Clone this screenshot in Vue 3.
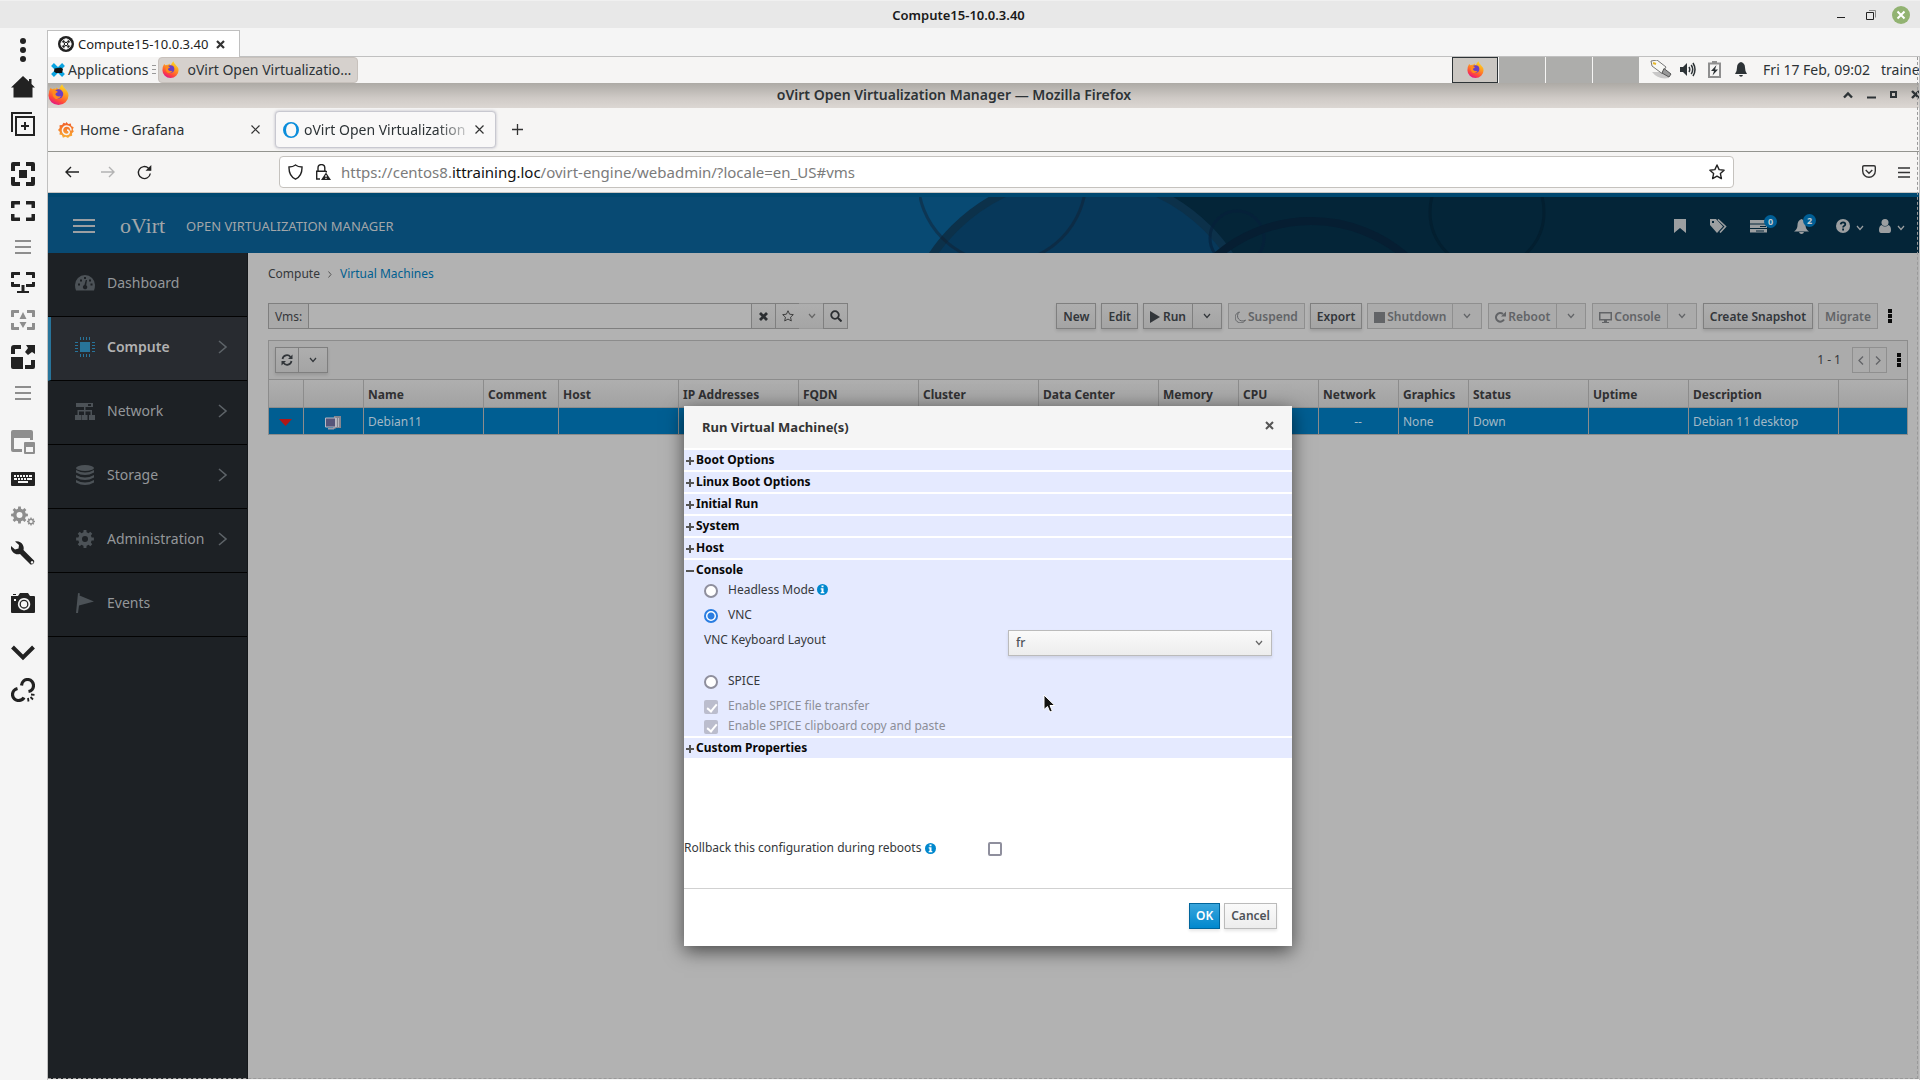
<script setup>
import { ref } from 'vue'

const gear = (cx, cy, r, teeth, hole) => {
  let d = ''
  const inner = r * 0.76
  const step = (Math.PI * 2) / teeth
  const pt = (rad, a) => `${(cx + rad * Math.cos(a)).toFixed(2)} ${(cy + rad * Math.sin(a)).toFixed(2)}`
  for (let i = 0; i < teeth; i++) {
    const a = i * step - Math.PI / 2
    d += `${i ? 'L' : 'M'}${pt(inner, a - step * 0.3)}L${pt(r, a - step * 0.2)}L${pt(r, a + step * 0.2)}L${pt(inner, a + step * 0.3)}`
  }
  return `${d}ZM${cx - hole} ${cy}a${hole} ${hole} 0 1 0 ${hole * 2} 0a${hole} ${hole} 0 1 0 ${-hole * 2} 0Z`
}

const lines = '<path d="M4 5h16v2H4zM4 11h16v2H4zM4 17h16v2H4z"/>'
const tools = [
  { id: 'Menu', art: '<circle cx="12" cy="3" r="3"/><circle cx="12" cy="12" r="3"/><circle cx="12" cy="21" r="3"/>' },
  { id: 'Home', art: '<path d="M12 1 0 12.500h2.500V22.500h19V12.500H24L20.500 9V4H18v2.500z"/>' },
  { id: 'Duplicate', art: '<path d="M1 20V1h20M5 5h18v18H5zM14 10v8M10 14h8" fill="none" stroke="currentColor" stroke-width="2"/>' },
  { id: 'Fit window', gap: true, art: '<path d="M0 9V2q0-2 2-2h7v4H4v5zM15 0h7q2 0 2 2v7h-4V4h-5zM0 15v7q0 2 2 2h7v-4H4v-5zM24 15v7q0 2-2 2h-7v-4h5v-5zM8 8h8v8H8z"/>' },
  { id: 'Full screen', art: '<path d="M0 9V3q0-1 1-1h8v3.500H3.500V9zM15 2h8q1 0 1 1v6h-3.500V5.500H15zM0 15v6q0 1 1 1h8v-3.500H3.500V15zM24 15v6q0 1-1 1h-8v-3.500h5.500V15z"/>' },
  { id: 'View list', short: true, dim: true, art: lines },
  { id: 'Multi monitor', art: '<path d="M0 7V2q0-1 1-1h8v3H3v3zM15 1h8q1 0 1 1v5h-3V4h-6zM0 11v4q0 1 1 1h8v-3H3v-2zM24 11v4q0 1-1 1h-8v-3h6v-2zM10.500 14h3v6H18v2H6v-2h4.500z"/>' },
  { id: 'Dynamic resolution', dim: true, art: '<path d="M0 9V3q0-1 1-1h7v3H3v4zM16 2h7q1 0 1 1v6h-3V5h-5zM0 15v6q0 1 1 1h7v-3H3v-4zM24 15v6q0 1-1 1h-7v-3h5v-4zM12 4l3.500 7h-7zM12 20l3.500-6h-7z"/>' },
  { id: 'Scaled mode', art: '<path d="M0 9V3q0-3 3-3h7v4H4v5zM0 12h12v12H2q-2 0-2-2zM15 0h9v9l-3-2-4 3-3-3 3-4zM20 15h4v7q0 2-2 2h-8v-4h6z"/>' },
  { id: 'Tab list', short: true, dim: true, art: lines },
  { id: 'Switch page', gap: true, dim: true, art: '<path d="M0 2q0-2 2-2h18q2 0 2 2v8h-3V8H3v11h8v3H2q-2 0-2-2zM13 13q0-1 1-1h9q1 0 1 1v10q0 1-1 1h-9q-1 0-1-1zm2 4v5h7v-5z" fill-rule="evenodd"/>' },
  { id: 'Grab keyboard', art: '<path fill-rule="evenodd" d="M1 5h22q1 0 1 1v12q0 1-1 1H1q-1 0-1-1V6q0-1 1-1zM3 8v2h2V8zm3 0v2h2V8zm3 0v2h2V8zm3 0v2h2V8zm3 0v2h2V8zm3 0v2h3V8zM3 11v2h3v-2zm4 0v2h2v-2zm3 0v2h2v-2zm3 0v2h2v-2zm3 0v2h5v-2zM7 14v2h10v-2z"/>' },
  { id: 'Preferences', dim: true, art: `<path fill-rule="evenodd" d="${gear(8.5, 11, 8.5, 8, 3)}${gear(20, 17.5, 4, 8, 1.6)}"/>` },
  { id: 'Tools', art: '<path fill-rule="evenodd" d="M4 .5a7 7 0 0 1 8.500 8.500L23 19.500a3 3 0 0 1-3.500 4L9 13A7 7 0 0 1 0 5l4 3.500 3.500-1 .5-3.500zM21 20a1.300 1.300 0 1 0 .1 0z"/>' },
  { id: 'Screenshot', gap: true, art: '<path fill-rule="evenodd" d="M9 2h8l2 3h4q1 0 1 1v15q0 1-1 1H1q-1 0-1-1V5h7zM13 7a6.200 6.200 0 1 0 .1 0zM3 8v2h2V8zM2 3h3v1H2z"/><circle cx="13" cy="13.200" r="3.800" fill="none" stroke="currentColor" stroke-width="1.300"/>' },
  { id: 'Minimize', gap: true, art: '<path d="m1.500 6 10.500 10.500L22.500 6" fill="none" stroke="currentColor" stroke-width="4"/>' },
  { id: 'Disconnect', art: '<path d="M10.500 7.500C11 3.500 14 1.500 16.500 1.500c4 0 6 3.500 6 6 0 3-2 5.500-5 6M6.500 10.500c-3 .8-5 3.500-5 6 0 3.500 3 6 6 6 2 0 4.500-1 5.500-3" fill="none" stroke="currentColor" stroke-width="3.200"/><path d="m17 20 .5 3.500M19.500 19l2.500 2.500M20 16.500l3.500.3" stroke="currentColor" stroke-width="1.800"/>' },
]

const nav = [
  { label: 'Dashboard', art: '<path fill-rule="evenodd" d="M10 2a10 10 0 0 1 10 10q0 3-1 5.500H1Q0 15 0 12A10 10 0 0 1 10 2zM3 10.500v2h2v-2zm2-4v2h2v-2zm4-2.500v2h2V4zm5 2.500v2h2v-2zm1.500 4v2h2v-2zM10.800 7l-1.400 5a2.200 2.200 0 1 0 1.800.2L12 7z"/>' },
  { label: 'Compute', more: true, active: true, art: '<path d="M5 5h10v10H5zM5 0h1v3H5zM8 0h1v3H8zM11 0h1v3h-1zM14 0h1v3h-1zM5 17h1v3H5zM8 17h1v3H8zM11 17h1v3h-1zM14 17h1v3h-1zM0 5h3v1H0zM0 8h3v1H0zM0 11h3v1H0zM0 14h3v1H0zM17 5h3v1h-3zM17 8h3v1h-3zM17 11h3v1h-3zM17 14h3v1h-3z"/>' },
  { label: 'Network', more: true, art: '<path fill-rule="evenodd" d="M1 2h17v4H1zM13 3v2h3V3zM9 6h1.500v3H17v5h3v5h-6v-5h1.500v-3.500h-5V14h2v5h-6v-5H9v-3.500H4V14h2v5H0v-5h2.500V9H9z"/>' },
  { label: 'Storage', more: true, art: '<ellipse cx="10" cy="3" rx="9" ry="3"/><path d="M1 5q9 5 18 0v2.500q-9 5-18 0zM1 10q9 5 18 0v2.500q-9 5-18 0zM1 15q9 5 18 0v2.500q-9 5-18 0z"/>' },
  { label: 'Administration', more: true, art: `<path fill-rule="evenodd" d="${gear(10, 10, 9, 8, 3)}"/>` },
  { label: 'Events', art: '<path d="M3 0 5 .5 4.500 2.500 19 8.500 4 12.500 3 20H1z"/>' },
]

const columns = [
  { name: '', width: 35 }, { name: '', width: 60 }, { name: 'Name', width: 120, value: 'Debian11' },
  { name: 'Comment', width: 75 }, { name: 'Host', width: 120 }, { name: 'IP Addresses', width: 120 },
  { name: 'FQDN', width: 120 }, { name: 'Cluster', width: 120 }, { name: 'Data Center', width: 120 },
  { name: 'Memory', width: 80 }, { name: 'CPU', width: 80 }, { name: 'Network', width: 80, value: '--', center: true },
  { name: 'Graphics', width: 70, value: 'None' }, { name: 'Status', width: 120, value: 'Down' },
  { name: 'Uptime', width: 100 }, { name: 'Description', width: 150, value: 'Debian 11 desktop' }, { name: '', width: 0 },
]

const actions = [
  { label: 'New' }, { label: 'Edit' },
  { label: 'Run', split: true, art: '<path d="M0 0 10 6 0 12z"/>' },
  { label: 'Suspend', off: true, art: '<path d="M4.500 1A5.500 5.500 0 1 0 10.500 9 5 5 0 0 1 4.500 1z" fill="none" stroke="currentColor"/>' },
  { label: 'Export' },
  { label: 'Shutdown', off: true, split: true, art: '<path d="M0 1h11v11H0z"/>' },
  { label: 'Reboot', off: true, split: true, art: '<path d="M9 8.500A4.300 4.300 0 1 1 8 3" fill="none" stroke="currentColor" stroke-width="2"/><path d="M6 5.500h5V.5z"/>' },
  { label: 'Console', off: true, split: true, wide: true, art: '<path fill-rule="evenodd" d="M0 1h13v8.500H8V11h2v1H3v-1h2V9.500H0zM1.500 2.500V8h10V2.500z"/>' },
  { label: 'Create Snapshot' }, { label: 'Migrate', off: true },
]

const closed = ['Boot Options', 'Linux Boot Options', 'Initial Run', 'System', 'Host']
const protocol = ref('vnc')
const layout = ref('fr')
const search = ref('')
const url = 'https://centos8.ittraining.loc/ovirt-engine/webadmin/?locale=en_US#vms'
const urlParts = url.split('ittraining.loc')
</script>

<template>
  <div class="desktop">
    <svg class="defs" aria-hidden="true">
      <defs>
        <linearGradient id="fxFlame" x1="0.8" y1="0" x2="0.3" y2="1">
          <stop offset="0" stop-color="#ffe226" /><stop offset=".4" stop-color="#ff9a1e" />
          <stop offset=".75" stop-color="#ff4a3a" /><stop offset="1" stop-color="#e3108a" />
        </linearGradient>
        <linearGradient id="grafana" x1="0" y1="0" x2="0" y2="1">
          <stop offset="0" stop-color="#f05a28" /><stop offset="1" stop-color="#fbb034" />
        </linearGradient>
        <symbol id="firefox" viewBox="0 0 20 20">
          <path fill="url(#fxFlame)" d="M2.500 3.500 4 5q1.500-1 3.500-.5L8.500 3q.5 1.500 2 2Q11.500 2 13.500.3q.3 2.200 2.500 4Q19.500 7.500 19.500 11A9.500 9 0 0 1 .5 11Q.5 6.500 2.500 3.500z" />
          <circle cx="10" cy="9.500" r="4.500" fill="#6a3fc4" />
          <path fill="#ff8a1c" d="M4.500 6.500q2.500-1.500 5 1-2.500.5-2.500 2.500 1.500 2.500 5.500 1.500-2 3.500-5.500 2.500-3.500-2-2.500-7.500z" />
        </symbol>
        <symbol id="caret" viewBox="0 0 8 6"><path d="m1 1 3 3.500L7 1" fill="none" stroke="currentColor" stroke-width="1.200" /></symbol>
        <symbol id="info" viewBox="0 0 11 11">
          <circle cx="5.500" cy="5.500" r="5.500" fill="#0088ce" />
          <path fill="#fff" d="M4.500 1.500h2v1.700h-2zM3.700 4.200h2.800v3.800h.8v1.200H3.700V8h.8V5.400h-.8z" />
        </symbol>
      </defs>
    </svg>

    <header class="host-title">
      <span class="host-name">Compute15-10.0.3.40</span>
      <div class="host-buttons">
        <button class="host-min" aria-label="Minimize"><svg width="8" height="12"><path d="M0 8.500h8" stroke="#222" /></svg></button>
        <button aria-label="Restore"><svg width="10" height="10"><path d="M3 .5h6.500v7" fill="none" stroke="#888" /><path d="M.5 2.500h7v7h-7z" fill="none" stroke="#222" /></svg></button>
        <button aria-label="Close"><svg width="18" height="18"><circle cx="9" cy="9" r="9" fill="#92b372" /><path d="m5.500 5.500 7 7m0-7-7 7" stroke="#fff" stroke-width="2" /></svg></button>
      </div>
    </header>

    <div class="client">
      <aside class="tools">
        <button v-for="t in tools" :key="t.id" :aria-label="t.id" :class="{ gap: t.gap, short: t.short, dim: t.dim }">
          <svg viewBox="0 0 24 24" v-html="t.art"></svg>
        </button>
      </aside>

      <div class="session">
        <div class="session-tabs">
          <div class="session-tab">
            <svg width="16" height="16" viewBox="0 0 16 16"><circle cx="8" cy="8" r="8" fill="#222" /><g fill="#fff"><circle cx="8" cy="4.300" r="1.700" /><circle cx="8" cy="11.700" r="1.700" /><circle cx="4.300" cy="8" r="1.700" /><circle cx="11.700" cy="8" r="1.700" /></g><circle cx="8" cy="8" r="5" fill="none" stroke="#fff" /><path d="m6.500 6.500 3 3m0-3-3 3" stroke="#fff" /></svg>
            <span>Compute15-10.0.3.40</span>
            <button aria-label="Close tab"><svg width="9" height="9"><path d="m1 1 7 7m0-7-7 7" stroke="#333" stroke-width="2.200" /></svg></button>
          </div>
        </div>

        <div class="viewport">
          <div class="guest">
            <div class="panel">
              <button class="apps">
                <svg width="14" height="14" viewBox="0 0 14 14"><path d="m1.500 1.500 11 11m0-11-11 11" stroke="#0aa3e0" stroke-width="4" /><path d="M3.500 5.500 10 4.500l2 1.500-1 4H5L3 8.500z" fill="#111" /></svg>
                Applications
              </button>
              <svg class="grip" width="4" height="9"><path d="M0 .5h4M0 4.500h4M0 8.500h4" stroke="#999" /></svg>
              <button class="task"><svg width="17" height="17"><use href="#firefox" /></svg>oVirt Open Virtualizatio…</button>
              <div class="pager">
                <button class="on" aria-label="Workspace 1"><svg width="17" height="17"><use href="#firefox" /></svg></button>
                <button v-for="n in 3" :key="n" :aria-label="'Workspace ' + (n + 1)"></button>
              </div>
              <div class="tray">
                <svg width="22" height="20" viewBox="0 0 22 20"><path d="M2 12q6 8 17 6l-3-6z" fill="#000" opacity=".18" /><path d="m1 1 6-1 9 7-4 6.500L2 6z" fill="#f7f7f5" stroke="#777" /><path d="m14 8.500 7 5.500-2 3-7-4z" fill="#999" stroke="#555" /><path d="m3 3 3 1" stroke="#e5b62c" stroke-width="2" /></svg>
                <svg width="16" height="15" viewBox="0 0 16 15"><path d="M0 5h3l4-4v13l-4-4H0z" fill="#2d3336" /><path d="M9 5q1.500 2.500 0 5M11.200 3q3 4.500 0 9M13 1q4 6.500 0 13" fill="none" stroke="#2d3336" stroke-width="1.500" /></svg>
                <svg width="13" height="17" viewBox="0 0 13 17"><path d="M1 2.500h11V16H1z" fill="none" stroke="#8f8f8f" stroke-width="2" /><path d="M4 0h5v3H4z" fill="#8f8f8f" /><path d="m8.500 4-5.500 6h3l-1.500 4.500 5.500-6H7z" fill="#2d3336" /></svg>
                <svg width="12" height="15" viewBox="0 0 12 15"><path d="M6 0q4 1 4 5.500 0 4 2 6.500H0q2-2.500 2-6.500Q2 1 6 0zM4 13h4q-.5 1.800-2 1.800T4 13z" fill="#2d3336" /></svg>
              </div>
              <span class="clock">Fri 17 Feb, 09:02</span>
              <span class="user">traine</span>
            </div>

            <div class="win-title">
              <svg width="21" height="21"><use href="#firefox" /></svg>
              <span>oVirt Open Virtualization Manager — Mozilla Firefox</span>
              <div class="win-buttons">
                <svg width="10" height="8"><path d="m1 6.500 4-4 4 4" fill="none" stroke="#2d3336" stroke-width="2.400" /></svg>
                <svg width="9" height="8"><path d="M0 6.500h9" stroke="#2d3336" stroke-width="2" /></svg>
                <svg width="7" height="7"><path d="M1 1h5v5H1z" fill="none" stroke="#2d3336" stroke-width="2" /></svg>
                <svg width="9" height="9"><path d="m1 1 7 7m0-7-7 7" stroke="#2d3336" stroke-width="2.400" /></svg>
              </div>
            </div>

            <div class="tabs">
              <div class="tab">
                <svg width="16" height="16" viewBox="0 0 16 16"><path fill="url(#grafana)" d="m8.500 0 1.700 2 2.600-.5.500 2.600 2.400 1.200-.9 2.200 1 2-1.800 1.800.2 2.500-2.700.6L10 16l-2.400-1.200-2.700.9-1-2.700-2.500-.6.500-2.500L0 8l1.700-2-.2-2.700 2.600-.4L5.500.8l2 .7z" /><path d="M13 8.500A4.300 4.300 0 1 0 9 12.500q2-.3 2.300-2.200Q11 8 9 8" fill="none" stroke="#f6f5f4" stroke-width="1.500" /></svg>
                <span>Home - Grafana</span>
                <button aria-label="Close tab"><svg width="9" height="9"><path d="m.5.5 8 8m0-8-8 8" stroke="#333" stroke-width="1.200" /></svg></button>
              </div>
              <div class="tab current">
                <svg width="16" height="16" viewBox="0 0 16 16"><path fill="#0b8ddb" fill-rule="evenodd" d="M8 0a8 8 0 0 1 0 16A8 8 0 0 1 8 0zm.3 1.500q-5 0-5.300 6.500.3 6.500 5.300 6.500 4.700 0 5-6.500-.3-6.500-5-6.500z" /></svg>
                <span>oVirt Open Virtualization</span>
                <button aria-label="Close tab"><svg width="9" height="9"><path d="m.5.5 8 8m0-8-8 8" stroke="#333" stroke-width="1.200" /></svg></button>
              </div>
              <button class="plus" aria-label="New tab"><svg width="11" height="11"><path d="M5.500 0v11M0 5.500h11" stroke="#333" stroke-width="1.300" /></svg></button>
            </div>

            <div class="navbar">
              <button aria-label="Back"><svg width="14" height="12"><path d="M14 6H1M6 1 1 6l5 5" fill="none" stroke="#222" stroke-width="1.400" /></svg></button>
              <button aria-label="Forward"><svg width="14" height="12"><path d="M0 6h13M8 1l5 5-5 5" fill="none" stroke="#b3b3b3" stroke-width="1.400" /></svg></button>
              <button aria-label="Reload"><svg width="15" height="15"><path d="M13.300 8.500A6 6 0 1 1 11.500 3.200L13.500 5.200" fill="none" stroke="#222" stroke-width="1.400" /><path d="M14.300 0v5.800H8.500z" fill="#222" /></svg></button>
              <div class="urlbar">
                <svg width="15" height="16" viewBox="0 0 15 16"><path d="M7.500 1Q10 3 14 3q.3 9-6.500 12.200Q.7 12 1 3q4 0 6.500-2z" fill="none" stroke="#222" stroke-width="1.400" /></svg>
                <svg class="lock" width="16" height="16" viewBox="0 0 16 16"><path d="M5 15H1.700V7.200h9.600M3 7V4a3.300 3.300 0 0 1 6.800 0v3M11.300 7v1.500" fill="none" stroke="#222" stroke-width="1.400" /><path d="M11 8.500 16 16H6z" fill="#222" /><path d="M11 11v2.200M11 14v1" stroke="#fff" stroke-width="1.200" /></svg>
                <a class="address" :href="url">{{ urlParts[0] }}<b>ittraining.loc</b>{{ urlParts[1] }}</a>
                <svg width="16" height="16" viewBox="0 0 16 16"><path d="m8 1 2.100 4.600 5 .6-3.700 3.400 1 5L8 12.100l-4.400 2.500 1-5L.9 6.200l5-.6z" fill="none" stroke="#222" stroke-width="1.400" stroke-linejoin="round" /></svg>
              </div>
              <button class="pocket" aria-label="Pocket"><svg width="14" height="14"><path d="M.7 2q0-1.300 1.300-1.300h10q1.300 0 1.300 1.300v4a6.300 6.300 0 0 1-12.600 0zM3.700 5 7 8.200 10.300 5" fill="none" stroke="#333" stroke-width="1.400" /></svg></button>
              <button aria-label="Open menu"><svg width="12" height="11"><path d="M0 1h12M0 5.500h12M0 10h12" stroke="#333" stroke-width="1.400" /></svg></button>
            </div>

            <div class="page">
              <header class="masthead">
                <svg class="rings" width="928" height="56" aria-hidden="true">
                  <path d="M170 0h758v56H170z" fill="#042538" />
                  <circle cx="162" cy="158" r="179" fill="#07385a" stroke="#0c314a" stroke-width="8" />
                  <g fill="none"><circle cx="83" cy="-18" r="84" stroke-width="3" stroke="#141f2e" stroke-opacity=".45" /><circle cx="318" cy="41" r="27" stroke-width="3" stroke="#07203a" stroke-opacity=".6" /><circle cx="392" cy="169" r="145" stroke-width="8" stroke="#061e32" /><circle cx="568" cy="15" r="57" stroke-width="3" stroke="#031f30" /></g>
                </svg>
                <button class="burger" aria-label="Toggle navigation"></button>
                <span class="brand">oVirt</span>
                <span class="product">OPEN VIRTUALIZATION MANAGER</span>
                <div class="mast-icons">
                  <button class="bookmark" aria-label="Bookmarks"><svg width="12" height="14"><path d="M0 0h12v14L6 9l-6 5z" /></svg></button>
                  <button class="tag" aria-label="Tags"><svg width="17" height="14" viewBox="0 0 17 14"><path fill-rule="evenodd" d="M0 0h6l7 7.500-6 6.500-7-8zM2 2v2h2V2z" /><path d="m8 .5 7.500 7-5.500 6" fill="none" stroke="currentColor" stroke-width="1.600" /></svg></button>
                  <button class="tasks" aria-label="Tasks"><svg width="17" height="13"><path fill-rule="evenodd" d="M0 0h17v3.500H0zM0 4.500h17V8H0zM0 9h17v3.500H0zM10 6h6v1h-6zM6 10.500h8v1H6z" /></svg><i>0</i></button>
                  <button class="alerts" aria-label="Notifications"><svg width="15" height="15"><path d="M7.500 0q4 1.500 4 6 0 4 3.500 6.500H0Q3.500 10 3.500 6q0-4.500 4-6zM5 13h5q-.5 2-2.500 2T5 13z" /></svg><i>2</i></button>
                  <button class="help" aria-label="Help"><svg width="14" height="14"><circle cx="7" cy="7" r="7" /><path d="M4.700 5.300q.3-2 2.400-2 2.200.1 2.200 1.900 0 1.200-1.300 1.800-.9.500-.9 1.500M7.100 9.500v2" fill="none" stroke="#042538" stroke-width="1.800" /></svg><svg class="tick" width="8" height="6"><use href="#caret" /></svg></button>
                  <button aria-label="Account"><svg width="12" height="14"><circle cx="6" cy="3.500" r="3.500" /><path d="M2.500 6q3.500 3 7 0 2.500 1 2.500 5 0 3-2 3H2q-2 0-2-3 0-4 2.500-5z" /></svg><svg class="tick" width="8" height="6"><use href="#caret" /></svg></button>
                </div>
              </header>

              <div class="body">
                <nav class="side">
                  <a v-for="n in nav" :key="n.label" href="#" :class="{ active: n.active }">
                    <svg width="20" height="20" viewBox="0 0 20 20" v-html="n.art"></svg>
                    <span>{{ n.label }}</span>
                    <svg v-if="n.more" class="chev" width="10" height="14"><path d="m1 1 7 6-7 6" fill="none" stroke="currentColor" stroke-width="1.600" /></svg>
                  </a>
                </nav>

                <main class="main">
                  <div class="crumbs">
                    <span>Compute</span>
                    <svg width="4" height="7"><path d="m.5.5 2.500 3-2.500 3" fill="none" stroke="#555" /></svg>
                    <a href="#">Virtual Machines</a>
                  </div>

                  <div class="toolbar">
                    <form class="search" @submit.prevent>
                      <label for="vms">Vms:</label>
                      <input id="vms" v-model="search" type="text" />
                      <button type="button" aria-label="Clear"><svg width="9" height="9"><path d="m1 1 7 7m0-7-7 7" stroke="#2b2e31" stroke-width="2.800" /></svg></button>
                      <button type="button" aria-label="Bookmark search"><svg width="12" height="12" viewBox="0 0 16 16"><path d="m8 1 2.100 4.600 5 .6-3.700 3.400 1 5L8 12.100l-4.400 2.500 1-5L.9 6.200l5-.6z" fill="none" stroke="#333" stroke-width="1.200" /></svg></button>
                      <button type="button" class="faint" aria-label="Saved searches"><svg width="8" height="6"><use href="#caret" /></svg></button>
                      <button aria-label="Search"><svg width="12" height="12"><circle cx="5" cy="5" r="3.800" fill="none" stroke="#2b2e31" stroke-width="1.800" /><path d="m8 8 3.500 3.500" stroke="#2b2e31" stroke-width="2" /></svg></button>
                    </form>
                    <div class="actions">
                      <div v-for="a in actions" :key="a.label" class="group" :class="{ off: a.off, split: a.split }">
                        <button :disabled="a.off"><svg v-if="a.art" :width="a.wide ? 13 : 11" height="12" v-html="a.art"></svg>{{ a.label }}</button>
                        <button v-if="a.split" class="more" :disabled="a.off" :aria-label="a.label + ' options'"><svg width="8" height="6"><use href="#caret" /></svg></button>
                      </div>
                      <button class="kebab" aria-label="More actions"><svg width="4" height="14"><path d="M0 0h4v4H0zM0 5h4v4H0zM0 10h4v4H0z" /></svg></button>
                    </div>
                  </div>

                  <section class="grid">
                    <div class="grid-bar">
                      <div class="group">
                        <button class="refresh" aria-label="Refresh"><svg width="12" height="12" viewBox="0 0 12 12"><path d="M1.500 5A4.500 4.500 0 0 1 9.500 3M10.500 7a4.500 4.500 0 0 1-8 2" fill="none" stroke="currentColor" stroke-width="1.700" /><path d="M7 5h4.500V.5zM5 7H.5v4.500z" /></svg></button>
                        <button class="more" aria-label="Refresh interval"><svg width="8" height="6"><use href="#caret" /></svg></button>
                      </div>
                      <span class="range">1 - 1</span>
                      <div class="group off pages">
                        <button aria-label="Previous page"><svg width="6" height="9"><path d="M5 .5 1 4.500l4 4" fill="none" stroke="currentColor" stroke-width="1.300" /></svg></button>
                        <button aria-label="Next page"><svg width="6" height="9"><path d="m1 .5 4 4-4 4" fill="none" stroke="currentColor" stroke-width="1.300" /></svg></button>
                      </div>
                      <button class="kebab" aria-label="Columns"><svg width="4" height="14"><path d="M0 0h4v4H0zM0 5h4v4H0zM0 10h4v4H0z" /></svg></button>
                    </div>
                    <table>
                      <colgroup><col v-for="(c, i) in columns" :key="i" :style="c.width ? { width: c.width + 'px' } : null" /></colgroup>
                      <thead><tr><th v-for="(c, i) in columns" :key="i">{{ c.name }}</th></tr></thead>
                      <tbody>
                        <tr>
                          <td v-for="(c, i) in columns" :key="i" :class="{ center: c.center || i < 2 }">
                            <svg v-if="i === 0" width="13" height="7"><path d="M0 0h13L6.500 7z" fill="#b01717" /></svg>
                            <svg v-else-if="i === 1" width="16" height="14" viewBox="0 0 16 14"><path d="M9 0h7v12h-5l-1 1H8z" fill="#85858f" /><path d="M11 2h1v9h-1zM13 2h1v9h-1z" fill="#b5b5bd" /><path d="M.5 2h10v9H.5z" fill="#55557a" stroke="#b9b9c4" /><path d="M3 12h6v1.500H3z" fill="#9999a8" /></svg>
                            <template v-else>{{ c.value }}</template>
                          </td>
                        </tr>
                      </tbody>
                    </table>
                  </section>
                </main>
              </div>

              <div class="overlay">
                <form class="dialog" role="dialog" aria-label="Run Virtual Machine(s)" @submit.prevent>
                  <div class="dialog-head">
                    <h1>Run Virtual Machine(s)</h1>
                    <button type="button" aria-label="Close"><svg width="9" height="9"><path d="m1 1 7 7m0-7-7 7" stroke="#555" stroke-width="2" /></svg></button>
                  </div>
                  <div class="dialog-body">
                    <section v-for="s in closed" :key="s">
                      <button type="button" class="fold"><svg width="8" height="8"><path d="M4 0v8M0 4h8" stroke="#555" stroke-width="2" /></svg>{{ s }}</button>
                    </section>
                    <section>
                      <button type="button" class="fold"><svg width="8" height="8"><path d="M0 4h8" stroke="#555" stroke-width="2" /></svg>Console</button>
                      <div class="options">
                        <label class="row"><input v-model="protocol" type="radio" value="headless" name="protocol" />Headless Mode<svg class="info" width="11" height="11"><use href="#info" /></svg></label>
                        <label class="row"><input v-model="protocol" type="radio" value="vnc" name="protocol" />VNC</label>
                        <div class="keyboard">
                          <label for="kbd">VNC Keyboard Layout</label>
                          <div class="select">
                            <select id="kbd" v-model="layout"><option>fr</option></select>
                            <svg width="8" height="6"><use href="#caret" /></svg>
                          </div>
                        </div>
                        <label class="row"><input v-model="protocol" type="radio" value="spice" name="protocol" />SPICE</label>
                        <div class="spice">
                          <label><input type="checkbox" checked disabled />Enable SPICE file transfer</label>
                          <label><input type="checkbox" checked disabled />Enable SPICE clipboard copy and paste</label>
                        </div>
                      </div>
                    </section>
                    <section>
                      <button type="button" class="fold"><svg width="8" height="8"><path d="M4 0v8M0 4h8" stroke="#555" stroke-width="2" /></svg>Custom Properties</button>
                    </section>
                    <div class="rollback">
                      <label for="rollback">Rollback this configuration during reboots<svg width="11" height="11"><use href="#info" /></svg></label>
                      <input id="rollback" type="checkbox" />
                    </div>
                  </div>
                  <div class="dialog-foot">
                    <button class="ok">OK</button>
                    <button type="button">Cancel</button>
                  </div>
                  <svg class="pointer" width="13" height="20" viewBox="0 0 13 20"><path d="M1 1v14.500l3.500-3 2.300 5.500 2.500-1L7 11.500h4.800z" fill="#111" stroke="#fff" /></svg>
                </form>
              </div>
            </div>
          </div>
          <div class="edge"></div>
        </div>
      </div>
    </div>
  </div>
</template>

<style>
body { margin: 0; }
</style>

<style scoped>
* { box-sizing: border-box; }
button, input, select { font: inherit; color: inherit; }
button { margin: 0; padding: 0; border: 0; background: none; display: flex; align-items: center; justify-content: center; flex: none; }
svg { flex: none; display: block; }
a { color: inherit; text-decoration: none; }
.defs { position: absolute; width: 0; height: 0; }
.desktop { display: flex; flex-direction: column; min-height: 100vh; overflow: hidden; background: #f5f5f5; font: 14px/20px "Noto Sans", sans-serif; color: #2d3336; }

.host-title { display: flex; align-items: center; height: 28px; background: #e8e8e8; border-top: 1px solid #f0f0f0; padding: 0 10px 0 80px; color: #1a1a1a; font-size: 13px; font-weight: 600; }
.host-name { flex: 1; text-align: center; }
.host-buttons { display: flex; align-items: center; gap: 16px; }
.host-min { margin-right: 5px; }

.client { display: flex; flex: 1; }
.tools { width: 47px; flex: none; padding-top: 3px; color: #222; }
.tools button { width: 46px; height: 37px; }
.tools button svg { width: 24px; height: 24px; fill: currentColor; }
.tools .gap { margin-top: 13px; }
.tools .short { height: 35px; }
.tools .dim { color: #8e8e8e; }

.session { flex: 1; min-width: 0; display: flex; flex-direction: column; padding-top: 2px; }
.session-tabs { display: flex; border-bottom: 1px solid #c0c0c0; }
.session-tab { display: flex; align-items: center; height: 27px; margin-bottom: -1px; padding: 0 14px 0 10px; gap: 4px; border: 1px solid #c0c0c0; border-bottom: 0; background: #fff; font-size: 13px; color: #222; }
.session-tab button { margin-left: 4px; }

.viewport { position: relative; flex: 1; display: flex; overflow: hidden; border: solid #c0c0c0; border-width: 0 1px; background: #f5f5f5; padding-bottom: 1px; }
.edge { position: absolute; inset: 0 1px 1px 0; border: dashed #999; border-width: 0 1px 1px 0; pointer-events: none; }
.guest { width: calc(100% + 9px); flex: none; display: flex; flex-direction: column; }

.panel { display: flex; align-items: center; height: 26px; background: #f6f5f4; padding: 0 0 1px 3px; }
.apps { gap: 3px; }
.grip { margin: 0 2px 0 4px; }
.task { width: 200px; height: 26px; justify-content: flex-start; padding-left: 3px; gap: 8px; border: 1px solid #c7c1bc; border-radius: 4px; background: #d6d1cd; }
.pager { display: flex; gap: 1px; margin-left: auto; }
.pager button { width: 46px; height: 26px; background: #adadab; }
.pager .on { border: 1px solid #2d3336; background: #cbc7c2; }
.tray { display: flex; align-items: center; gap: 12px; margin: 0 16px 0 11px; }
.tray svg:first-child { margin-right: -4px; }
.tray svg:last-child { margin-left: 2px; }
.clock { margin-right: 11px; }
.user { width: 47px; }

.win-title { display: flex; align-items: center; height: 25px; background: linear-gradient(#adaaa5, #cfcac6 60%, #dcd7d3); font-weight: 600; }
.win-title svg, .win-title span { margin-bottom: 2px; }
.win-title span { flex: 1; text-align: center; padding-right: 4px; }
.win-buttons { display: flex; align-items: center; gap: 14px; padding-right: 8px; }

.tabs { display: flex; align-items: center; height: 44px; padding-left: 2px; background: #f6f5f4; border-bottom: 1px solid #93948f; }
.tab { display: flex; align-items: center; width: 221px; height: 37px; padding: 0 11px 0 8px; gap: 6px; border-radius: 4px; }
.tab span { flex: 1; white-space: nowrap; overflow: hidden; }
.tab.current { margin-left: 4px; padding-left: 7px; gap: 5px; border: 1px solid #c8c8d0; background: #f9f8f8; box-shadow: 0 0 3px rgba(100, 100, 130, .4); }
.tab.current span { mask-image: linear-gradient(90deg, #000 80%, transparent 103%); }
.plus { margin-left: 16px; }

.navbar { display: flex; align-items: center; height: 41px; background: #f6f5f4; border-bottom: 1px solid #c9c6c3; padding: 0 18px 0 17px; }
.navbar > button + button { margin-left: 22px; }
.urlbar { display: flex; align-items: center; flex: 1; height: 32px; margin: 0 134px 0 127px; padding: 0 8px; border: 1px solid #c5c2be; border-radius: 4px; background: #fff; }
.lock { margin: 0 10px 0 12px; }
.address { flex: 1; font-size: 15px; color: #7b7b7b; }
.address b { font-weight: 400; color: #111; }
.navbar .urlbar + .pocket { margin-left: -6px; }

.page { position: relative; flex: 1; display: flex; flex-direction: column; background: #b2b2b2; color: #35383b; font-size: 12px; }
.masthead { position: relative; display: flex; align-items: center; height: 60px; border-top: 4px solid #004870; padding: 2px 0 0 25px; background: #084a73; color: #a2a6a9; }
.rings { position: absolute; right: 0; top: 0; left: 871px; width: calc(100% - 871px); background: linear-gradient(90deg, transparent 300px, #042538 300px); }
.burger { width: 22px; height: 14px; border: solid #9c9fa2; border-width: 2px 0; background: linear-gradient(#9c9fa2, #9c9fa2) center / 100% 2px no-repeat; }
.brand { width: 66px; margin-left: 25px; font: 22px/24px "Liberation Serif", serif; }
.product { font-size: 13px; }
.mast-icons { position: relative; display: flex; align-items: center; margin-left: auto; padding-right: 23px; fill: currentColor; color: #9c9fa1; }
.mast-icons button { position: relative; }
.mast-icons i { position: absolute; left: 14px; top: -5px; width: 13px; height: 13px; border-radius: 7px; background: #005f96; color: #c4ccd0; font: 700 9px/13px "Noto Sans", sans-serif; text-align: center; }
.mast-icons .alerts i { left: 9px; }
.bookmark { margin-right: 24px; }
.tag { margin-right: 23px; }
.tasks { margin-right: 27px; }
.alerts { margin-right: 27px; }
.help { margin-right: 15px; }
.tick { margin: 3px 0 0 6px; }

.body { display: flex; flex: 1; }
.side { width: 200px; flex: none; background: #1d2125; border-right: 1px solid #15181b; color: #94979a; font-size: 14px; }
.side a { display: flex; align-items: center; height: 64px; padding: 0 19px 3px 27px; gap: 12px; border-bottom: 1px solid #030303; }
.side a svg { fill: #4c5257; color: #5d6368; }
.side .chev { margin-left: auto; fill: none; }
.side .active { border-left: 3px solid #28749a; padding-left: 24px; background: #282b30; color: #b2b2b2; font-weight: 600; }
.side .active svg:first-child { fill: #28749a; }

.main { flex: 1; min-width: 0; padding: 10px 20px; }
.crumbs { display: flex; align-items: center; gap: 8px; height: 20px; padding-top: 2px; }
.crumbs a { color: #005f90; }
.toolbar { display: flex; justify-content: space-between; margin-top: 20px; }
.search { display: flex; height: 26px; }
.search label { width: 41px; padding: 1px 0 0 6px; line-height: 24px; border: 1px solid #7f7f7f; background: #a9a9a9; }
.search input { width: 444px; margin-left: -1px; padding: 0 6px; border: 1px solid #7f7f7f; background: #b2b2b2; outline: 0; }
.search button { width: 25px; margin-left: -1px; border: 1px solid #7f7f7f; background: linear-gradient(#aeaeae, #a5a5a5); }
.search .faint { border-color: #999; color: #666; border-left: 0; border-right: 0; }
.actions { display: flex; align-items: center; }
.group { display: flex; height: 26px; margin-right: 5px; box-shadow: 0 2px 3px rgba(0, 0, 0, .12); color: #32363a; }
.group.split { margin-right: 6px; }
.group button { padding: 1px 6px 0; border: 1px solid #7f7f7f; background: linear-gradient(#aeaeae, #a4a4a4); font-weight: 600; gap: 2px; }
.group button + button { margin-left: -1px; width: 30px; padding: 0; }
.group svg { fill: currentColor; }
.group.off { box-shadow: none; color: #626467; }
.group.off button { border-color: #8f8f8f; background: #ababab; }
.kebab { width: 24px; height: 26px; fill: #0c0c0c; }
.actions .kebab { margin: 0 6px 0 -5px; }

.grid { margin-top: 11px; border: 1px solid #8c8c8c; background: #ababab; }
.grid-bar { display: flex; align-items: center; height: 39px; padding-left: 6px; border-bottom: 1px solid #8c8c8c; }
.grid-bar .refresh { width: 24px; padding: 0; }
.grid-bar .group .more { width: 30px; }
.range { margin: 0 11px 0 auto; }
.grid-bar .pages { margin-right: 0; }
.grid-bar .pages button { width: 18px; padding: 0; }
.grid-bar .kebab { margin-left: 4px; width: 16px; }
table { width: 100%; table-layout: fixed; border-collapse: separate; border-spacing: 0; }
th, td { height: 28px; padding: 2px 0 0 4px; border: solid #8c8c8c; border-width: 0 1px 1px 0; text-align: left; white-space: nowrap; overflow: hidden; line-height: 20px; }
th { background: linear-gradient(#afafaf, #a2a2a2); color: #303032; }
td { height: 26px; background: #005e92; color: #a3b9c6; border-bottom: 0; }
th:last-child, td:last-child { border-right: 0; }
td.center { padding: 2px 1px 0 0; text-align: center; }
td.center svg { display: inline-block; vertical-align: middle; }

.overlay { position: absolute; inset: 0; display: flex; justify-content: center; align-items: flex-start; padding-top: 213px; }
.dialog { position: relative; width: 608px; background: #fff; box-shadow: 0 5px 18px rgba(0, 0, 0, .6); }
.dialog-head { display: flex; align-items: center; justify-content: space-between; height: 42px; padding: 0 18px; background: #f5f5f5; }
.dialog-head button { margin-bottom: 4px; }
h1 { margin: 0; font-size: 13px; font-weight: 700; color: #333; }
.dialog-body { display: flex; flex-direction: column; gap: 2px; padding: 2px 0 30px; }
.dialog-body section { background: #e5eaff; }
.fold { width: 100%; height: 20px; justify-content: flex-start; padding: 0 2px; gap: 2px; font-weight: 700; color: #080808; }
.fold svg { margin-top: 1px; }
.options { margin-top: -2px; padding-left: 20px; }
.row { display: flex; align-items: center; height: 25px; padding-bottom: 2px; }
.row input { margin-top: 2px; }
.info { margin-left: 2px; }
input[type="radio"], input[type="checkbox"] { appearance: none; position: relative; flex: none; width: 14px; height: 14px; margin: 0 10px 0 0; border: 2px solid #8f8f9d; border-radius: 50%; background: #fff; }
input[type="radio"]:checked { border-color: #2a7de1; background: radial-gradient(#2a7de1 3px, #fff 4px); }
input[type="checkbox"] { border-radius: 2px; }
input[type="checkbox"]:checked { border-color: #bbbdcd; background: #bbbdcd; }
input[type="checkbox"]:checked::after { content: ""; position: absolute; left: 3px; top: 0; width: 4px; height: 8px; border: solid #fff; border-width: 0 2px 2px 0; transform: rotate(40deg); }
.options .row input { margin-top: 2px; }
.keyboard { display: flex; justify-content: space-between; align-items: flex-start; height: 41px; padding: 2px 20px 0 0; }
.select { position: relative; width: 264px; }
.select select { appearance: none; width: 100%; height: 26px; padding: 0 7px; border: 1px solid #bbb; border-radius: 0; background: linear-gradient(#fafafa, #ededed); box-shadow: 0 2px 3px rgba(3, 3, 3, .1); font-weight: 500; color: #4d5258; }
.select svg { position: absolute; right: 9px; top: 10px; color: #666; pointer-events: none; }
.spice { padding-top: 2px; color: #8c8e98; }
.spice label { display: flex; align-items: center; height: 20px; }
.spice input { margin-top: 2px; }
.rollback { display: flex; align-items: center; height: 20px; margin-top: 78px; }
.rollback label { display: flex; align-items: center; gap: 4px; width: 304px; }
.rollback input { margin-top: 2px; }
.dialog-foot { display: flex; justify-content: flex-end; height: 58px; gap: 4px; padding: 14px 15px 0 0; border-top: 1px solid #d1d1d1; }
.dialog-foot button { height: 26px; padding: 0 6px; border: 1px solid #bbb; background: linear-gradient(#fafafa, #ededed); box-shadow: 0 2px 3px rgba(3, 3, 3, .1); font-weight: 600; color: #4d5258; }
.dialog-foot .ok { border-color: #00659c; background: linear-gradient(#39a5dc, #0088ce); color: #fff; }
.pointer { position: absolute; left: 359px; top: 288px; }
</style>
